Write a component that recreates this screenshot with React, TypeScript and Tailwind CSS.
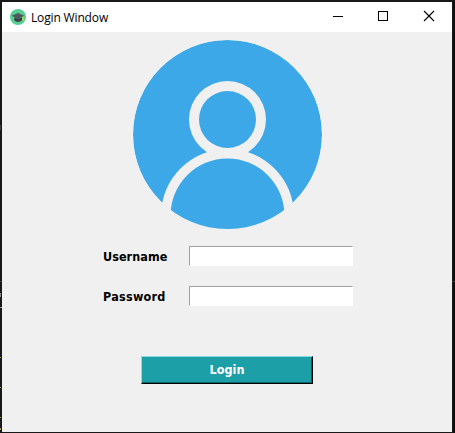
function AppIcon() {
  return (
    <svg width="16" height="16" viewBox="0 0 16 16" className="shrink-0">
      <circle cx="8" cy="8" r="8" fill="#55cf93" />
      <path d="M4.3 8.2 8 9.8l4-1.6v3.4q-4 2.6-7.7 0z" fill="#3b4048" />
      <path d="M1.5 6.8 8 4l6.3 2.8L8 10z" fill="#505862" />
      <path d="M13 7.2v2.6" stroke="#b5c934" strokeWidth="0.8" />
      <path d="M12.4 8.8h1.6v2.6h-1.6z" fill="#c4d72f" />
    </svg>
  );
}

function Avatar() {
  return (
    <svg width="189" height="189" viewBox="0 0 189 189" className="mx-auto block">
      <defs>
        <clipPath id="disc">
          <circle cx="94.5" cy="94.5" r="94.5" />
        </clipPath>
      </defs>
      <g clipPath="url(#disc)">
        <circle cx="94.5" cy="94.5" r="94.5" fill="#3ca8e8" />
        <circle cx="94.5" cy="79.5" r="38.5" fill="#f0f0f0" />
        <circle cx="94.5" cy="175.5" r="66.5" fill="#f0f0f0" />
        <circle cx="94.5" cy="79.5" r="28.5" fill="#3ca8e8" />
        <circle cx="94.5" cy="175.5" r="57" fill="#3ca8e8" />
        <path d="M27 163h10.500v40H27zM151.500 163h10.500v40h-10.500z" fill="#f0f0f0" />
      </g>
    </svg>
  );
}

function Field({ label, type, tracking }: { label: string; type: string; tracking: string }) {
  return (
    <label className="flex h-5 items-center">
      <span
        className={`w-[86px] pt-0.5 font-['DejaVu_Sans_Condensed','DejaVu_Sans',sans-serif] text-[12.5px] leading-5 font-bold text-black [font-stretch:condensed] ${tracking}`}
      >
        {label}
      </span>
      <input
        type={type}
        className="h-5 w-[164px] border border-t-[#a0a0a0] border-r-white border-b-white border-l-[#a0a0a0] bg-white px-1 text-xs outline-none"
      />
    </label>
  );
}

function TitleBar() {
  return (
    <header className="flex h-[30px] items-center bg-white pl-2">
      <AppIcon />
      <h1 className="ml-[5px] flex-1 pt-px font-['Open_Sans','Noto_Sans',sans-serif] text-[12px] leading-4 tracking-[-0.15px] text-black">
        Login Window
      </h1>
      <svg width="120" height="30" viewBox="0 0 120 30" fill="none" stroke="#000" shapeRendering="crispEdges">
        <path d="M1 14.5h10M46.5 9.500h9v9h-9z" />
        <path d="M92 9l10 10M102 9l-10 10" shapeRendering="auto" strokeWidth="1.1" />
      </svg>
    </header>
  );
}

/* Slivers of the editor that show on either side of the window. */
function LeftEdge() {
  return (
    <svg width="2" height="431" viewBox="0 2 2 431" shapeRendering="crispEdges" className="shrink-0">
      <path d="M0 281h2v1H0zM0 125h1v5H0z" fill="#3a3a3a" />
      <path d="M0 293h1v4H0z" fill="#8c8c8c" />
      <path d="M0 307h2v1H0z" fill="#a8a8a8" />
      <path d="M0 357h1v1H0zM0 387h1v1H0zM0 417h1v1H0zM0 428h1v2H0z" fill="#a39a5c" />
    </svg>
  );
}

function RightEdge() {
  return (
    <svg width="3" height="431" viewBox="0 2 3 431" shapeRendering="crispEdges" className="shrink-0">
      <path d="M1 2h2v431H1z" fill="#101010" />
      <path d="M0 281h3v1H0z" fill="#3a3a3a" />
    </svg>
  );
}

export default function App() {
  return (
    <div className="flex h-[433px] w-[455px] overflow-hidden bg-[#181818] pt-0.5">
      <LeftEdge />
      <main className="h-[430px] w-[450px] shrink-0 bg-[#f0f0f0]">
        <TitleBar />
        <form className="pt-2">
          <Avatar />
          <div className="mt-[17px] ml-[101px] flex flex-col gap-5">
            <Field label="Username" type="text" tracking="tracking-[0.05px]" />
            <Field label="Password" type="password" tracking="tracking-[0.25px]" />
          </div>
          <button
            type="button"
            className="mt-[50px] ml-[139px] block h-7 w-[172px] border border-t-[#86dce0] border-r-black border-b-black border-l-[#86dce0] bg-[#1c9fa6] font-['DejaVu_Sans_Condensed','DejaVu_Sans',sans-serif] text-[12.5px] leading-4 font-bold text-white shadow-[inset_-1px_-1px_0_#0b6468] [font-stretch:condensed]"
          >
            Login
          </button>
        </form>
      </main>
      <RightEdge />
    </div>
  );
}
